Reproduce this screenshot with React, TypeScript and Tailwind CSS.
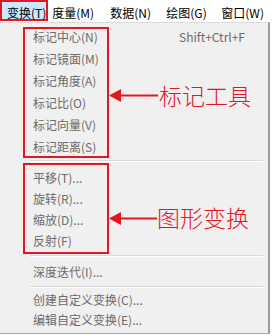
const RED = "#e5161f";

const menuBar = [
  { label: "变换(T)", w: "w-[55px]", active: true },
  { label: "度量(M)", w: "w-[58px]" },
  { label: "数据(N)", w: "w-[56px]" },
  { label: "绘图(G)", w: "w-[55px]" },
  { label: "窗口(W)", w: "w-[60px]" },
];

function Row({ label, shortcut, h = "h-[22px]" }: { label: string; shortcut?: string; h?: string }) {
  return (
    <div className={`${h} flex items-center justify-between pl-[33px] pr-[23px] text-[12px] leading-[16px] text-[#6b6b6b]`}>
      <span>{label}</span>
      {shortcut && <span>{shortcut}</span>}
    </div>
  );
}

function Separator({ className }: { className: string }) {
  return <div className={`ml-[30px] mr-[5px] h-[2px] border-t border-[#d8d8d8] border-b border-b-white ${className}`} />;
}

export default function App() {
  return (
    <div
      className="relative w-[272px] h-[336px] bg-white overflow-hidden"
      style={{ fontFamily: '"Noto Sans CJK SC", "Noto Sans", sans-serif' }}
    >
      {/* menu bar */}
      <div className="flex h-[22px] text-[12px] leading-[16px] text-black whitespace-nowrap">
        {menuBar.map((m) =>
          m.active ? (
            <div key={m.label} className={`${m.w} h-[21px] pl-[5px] pt-[3px] bg-[#cce8ff] border-2 border-[#e5161f]`}>
              {m.label}
            </div>
          ) : (
            <div key={m.label} className={`${m.w} shrink-0 pl-[4px] pt-[5px]`}>
              {m.label}
            </div>
          )
        )}
      </div>

      {/* dropdown */}
      <div className="w-[270px] h-[312px] bg-[#f0f0f0] border-t border-[#dadada] border-r-2 border-r-[#9c9c9c] border-b border-b-[#a8a8a8] pt-[3px]">
        <Row label="标记中心(N)" shortcut="Shift+Ctrl+F" />
        <Row label="标记镜面(M)" />
        <Row label="标记角度(A)" />
        <Row label="标记比(O)" />
        <Row label="标记向量(V)" />
        <Row label="标记距离(S)" />
        <Separator className="mt-[2px] mb-[5px]" />
        <Row label="平移(T)..." h="h-[21px]" />
        <Row label="旋转(R)..." h="h-[21px]" />
        <Row label="缩放(D)..." h="h-[21px]" />
        <Row label="反射(F)" h="h-[21px]" />
        <Separator className="mt-[4px] mb-[4px]" />
        <Row label="深度迭代(I)..." />
        <Separator className="mt-[3px] mb-[2px]" />
        <Row label="创建自定义变换(C)..." h="h-[20px]" />
        <Row label="编辑自定义变换(E)..." h="h-[20px]" />
      </div>

      {/* annotation boxes */}
      <div className="absolute left-[23px] top-[27px] w-[86px] h-[131px] border-2 border-[#e5161f]" />
      <div className="absolute left-[23px] top-[163px] w-[86px] h-[91px] border-2 border-[#e5161f]" />

      {/* arrows */}
      <svg className="absolute left-0 top-0 pointer-events-none" width="272" height="336">
        <line x1="116" y1="95.5" x2="158" y2="95.5" stroke={RED} strokeWidth="2" />
        <polygon points="109,95.5 121,89 121,102" fill={RED} />
        <line x1="116" y1="218.5" x2="157" y2="218.5" stroke={RED} strokeWidth="2" />
        <polygon points="109,218.5 121,212 121,225" fill={RED} />
      </svg>

      {/* labels */}
      <div className="absolute left-[159px] top-[80px] text-[23px] leading-[30px] font-light text-[#e5161f]">
        标记工具
      </div>
      <div className="absolute left-[157px] top-[202px] text-[23px] leading-[30px] font-light text-[#e5161f]">
        图形变换
      </div>
    </div>
  );
}
